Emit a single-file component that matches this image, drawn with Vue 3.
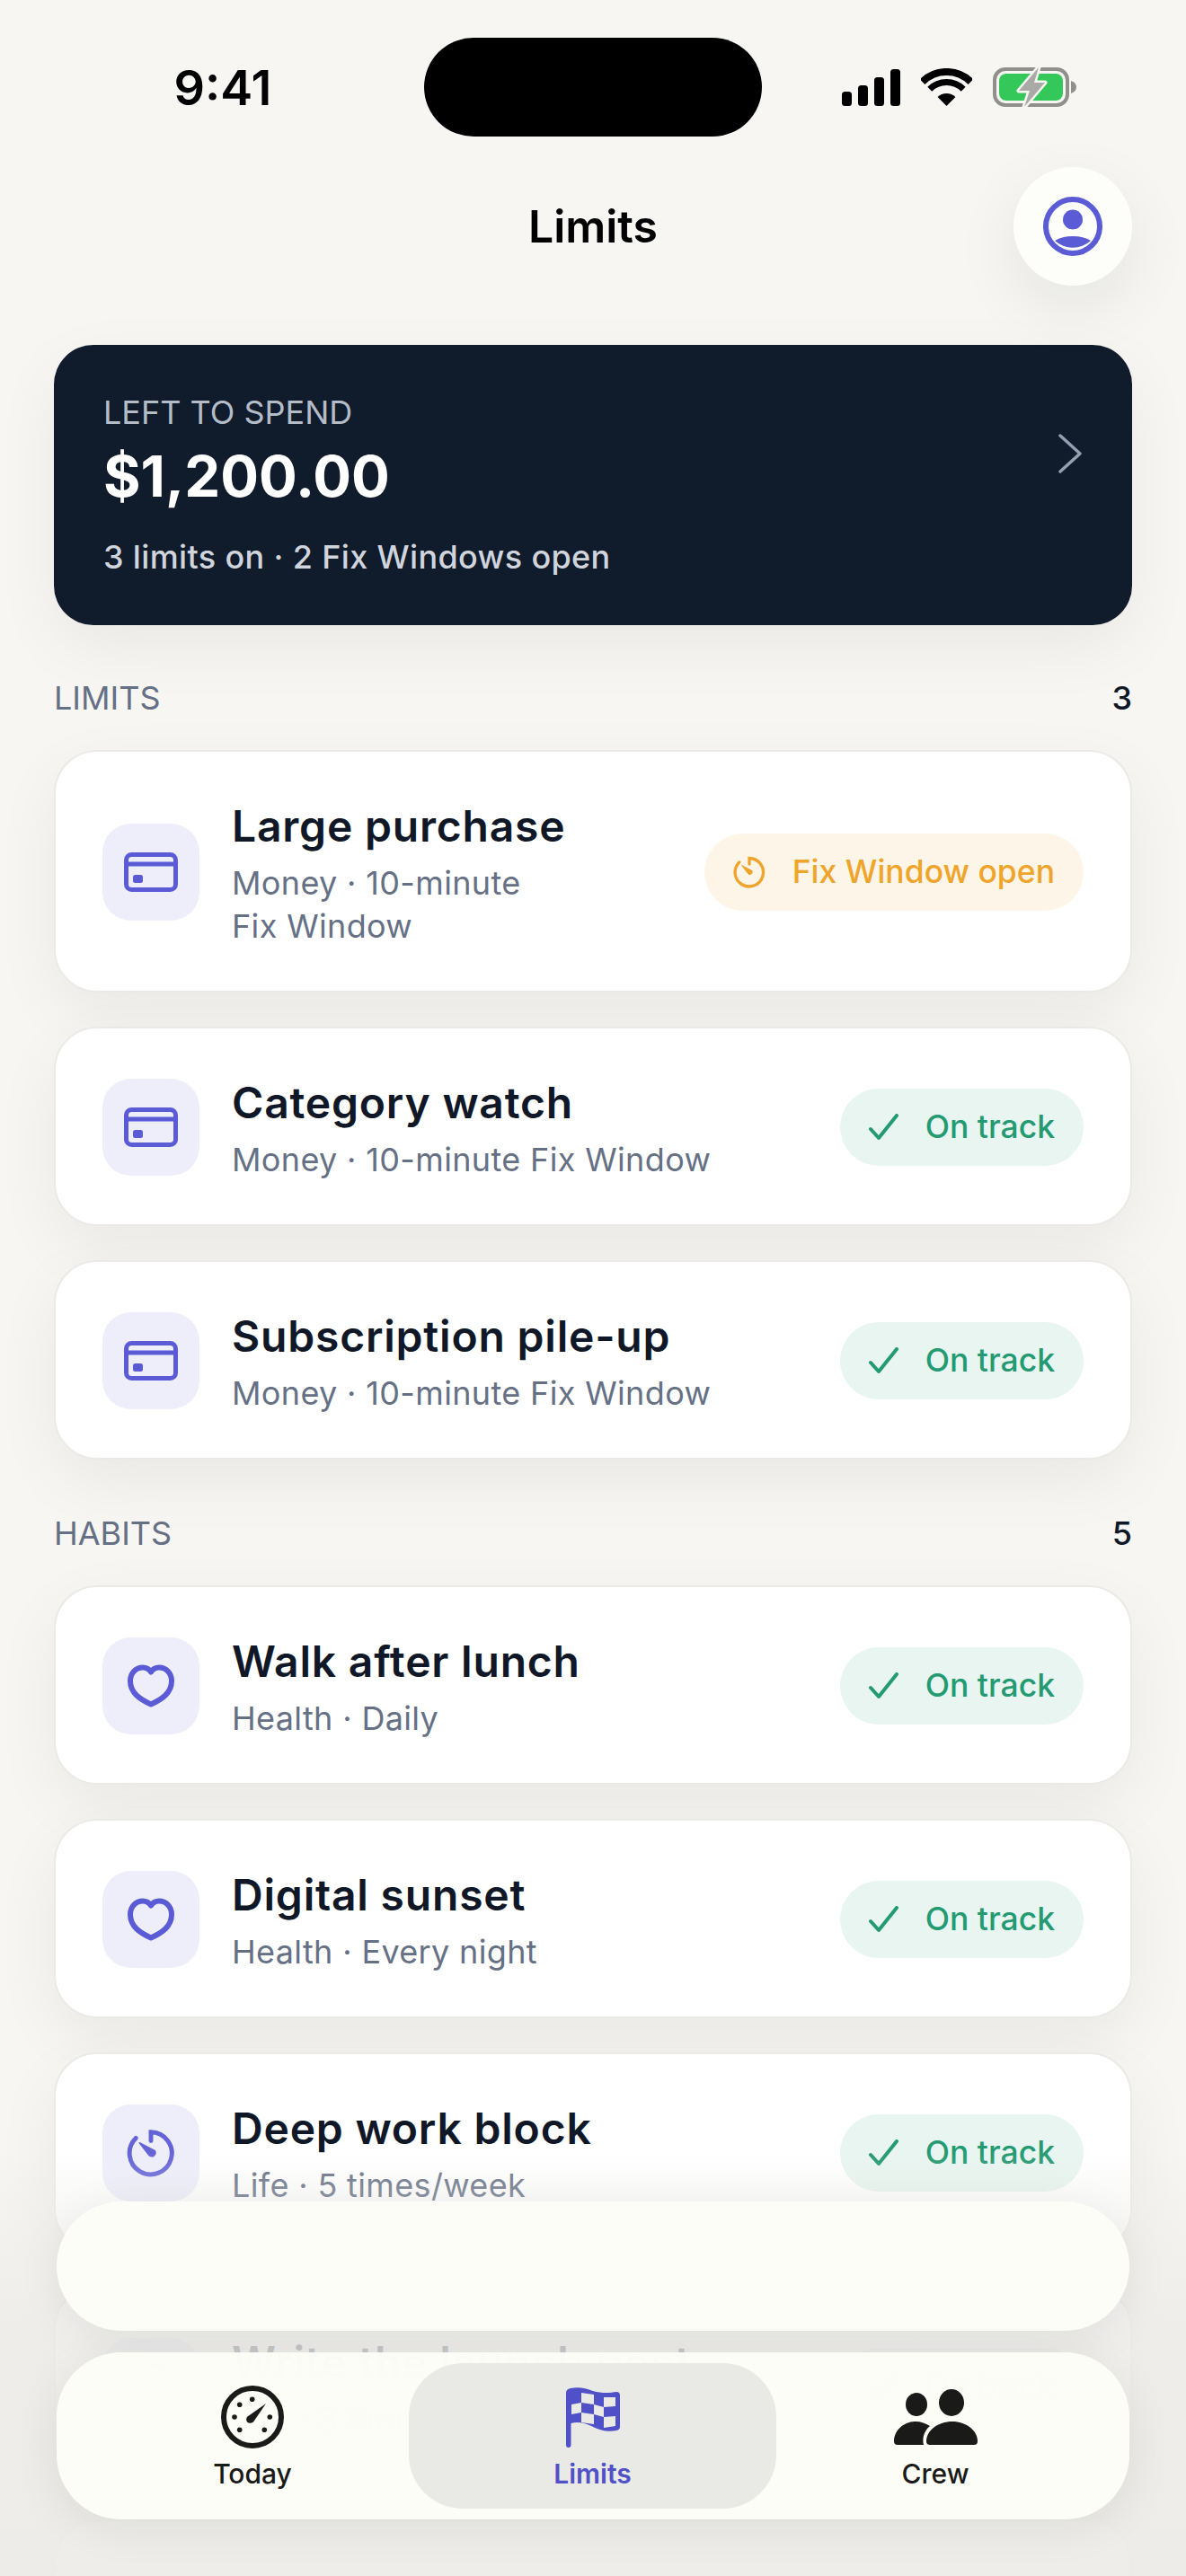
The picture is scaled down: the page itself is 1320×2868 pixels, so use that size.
<script setup>
const limits = [
  { name: 'Large purchase', sub: 'Money · 10-minute Fix\u00a0Window', icon: 'card', open: true },
  { name: 'Category watch', sub: 'Money · 10-minute Fix\u00a0Window', icon: 'card' },
  { name: 'Subscription pile-up', sub: 'Money · 10-minute Fix\u00a0Window', icon: 'card' }
]

const habits = [
  { name: 'Walk after lunch', sub: 'Health · Daily', icon: 'heart' },
  { name: 'Digital sunset', sub: 'Health · Every night', icon: 'heart' },
  { name: 'Deep work block', sub: 'Life · 5 times/week', icon: 'timer' },
  { name: 'Write the launch post', sub: 'Life · 3 times/week', icon: 'timer' }
]

const sections = [
  { title: 'Limits', count: 3, rows: limits },
  { title: 'Habits', count: 5, rows: habits }
]
</script>

<template>
  <div class="screen">
    <div class="status-bar">
      <div class="time">9:41</div>
      <div class="island"></div>
      <div class="status-icons">
        <svg width="65" height="41" viewBox="0 0 65 41">
          <rect x="0" y="25" width="11" height="16" rx="3.5" />
          <rect x="18" y="18" width="11" height="23" rx="3.5" />
          <rect x="36" y="9" width="11" height="32" rx="3.5" />
          <rect x="54" y="0" width="11" height="41" rx="3.5" />
        </svg>
        <svg width="57" height="42" viewBox="0 0 57 42">
          <path d="M1.6 15.1A38 38 0 0 1 55.4 15.1" fill="none" stroke="#000" stroke-width="8" />
          <path d="M9.8 23.3A26.5 26.5 0 0 1 47.2 23.3" fill="none" stroke="#000" stroke-width="7" />
          <path d="M28.5 42L18.6 32.1A14 14 0 0 1 38.4 32.1Z" />
        </svg>
        <svg width="94" height="46" viewBox="0 0 94 46">
          <rect x="2" y="3" width="81" height="40" rx="12" fill="none" stroke="#8f8f8b" stroke-width="4" />
          <rect x="7" y="8" width="71" height="30" rx="8" fill="#34c759" />
          <path d="M87 16Q93 18 93 23Q93 28 87 30Z" fill="#8f8f8b" />
          <path d="M51 1L29 27H41L35 45L58 18H46Z" fill="#a9a9a5" stroke="#f7f6f2" stroke-width="5" stroke-linejoin="round" paint-order="stroke" />
        </svg>
      </div>
    </div>

    <div class="top-bar">
      <div></div>
      <div class="page-title">Limits</div>
      <div class="avatar">
        <svg width="66" height="66" viewBox="0 0 66 66">
          <circle cx="33" cy="33" r="30" fill="none" stroke="#5b5bd6" stroke-width="6" />
          <circle cx="33" cy="25.5" r="11" fill="#5b5bd6" />
          <path d="M13 49Q21 44 33 44Q45 44 53 49A30 30 0 0 1 13 49Z" fill="#5b5bd6" />
        </svg>
      </div>
    </div>

    <div class="hero">
      <div>
        <div class="hero-label">LEFT TO SPEND</div>
        <div class="hero-amount">$1,200.00</div>
        <div class="hero-sub">3 limits on · 2 Fix Windows open</div>
      </div>
      <svg class="hero-arrow" width="26" height="44" viewBox="0 0 26 44">
        <path d="M2 2L24 22L2 42" fill="none" stroke="#94a0b0" stroke-width="3.5" stroke-linecap="round" stroke-linejoin="round" />
      </svg>
    </div>

    <div class="section" v-for="section in sections" :key="section.title">
      <div class="section-head">
        <div class="section-title">{{ section.title }}</div>
        <div class="section-count">{{ section.count }}</div>
      </div>

      <div class="rows">
        <div class="row" v-for="row in section.rows" :key="row.name">
          <div class="row-icon">
            <svg v-if="row.icon === 'card'" width="60" height="44" viewBox="0 0 60 44">
              <rect x="2.5" y="2.5" width="55" height="39" rx="6" fill="none" stroke="#5b5bd6" stroke-width="5" />
              <path d="M2.5 13H57.5" stroke="#5b5bd6" stroke-width="5" />
              <rect x="10" y="25" width="11" height="9" rx="2.5" fill="#5b5bd6" />
            </svg>
            <svg v-else-if="row.icon === 'heart'" width="52" height="48" viewBox="0 0 52 48">
              <path d="M26 44.5C14 39 3 32 3 18.5C3 9.5 9.5 3.5 17 3.5C21 3.5 24 5.5 26 8.5C28 5.5 31 3.5 35 3.5C42.5 3.5 49 9.5 49 18.5C49 32 38 39 26 44.5Z" fill="none" stroke="#5b5bd6" stroke-width="6" stroke-linejoin="round" />
            </svg>
            <svg v-else width="54" height="54" viewBox="0 0 36 36">
              <path d="M18 9V2.5A15.7 15.7 0 1 1 6.8 7" fill="none" stroke="#6464d8" stroke-width="3.3" stroke-linecap="round" />
              <path d="M9.5 10.5L21 16.5Q22 19 19.5 20.5Q17.5 20.8 16.5 19.5Z" fill="#6464d8" stroke="#6464d8" stroke-linejoin="round" />
            </svg>
          </div>

          <div class="row-text">
            <div class="row-name">{{ row.name }}</div>
            <div class="row-sub">{{ row.sub }}</div>
          </div>

          <div class="pill" :class="{ open: row.open }">
            <svg v-if="row.open" width="36" height="36" viewBox="0 0 36 36">
              <path d="M18 9V2.5A15.7 15.7 0 1 1 6.8 7" fill="none" stroke="#efa52b" stroke-width="3.3" stroke-linecap="round" />
              <path d="M9.5 10.5L21 16.5Q22 19 19.5 20.5Q17.5 20.8 16.5 19.5Z" fill="#efa52b" stroke="#efa52b" stroke-linejoin="round" />
            </svg>
            <svg v-else width="33" height="30" viewBox="0 0 33 30">
              <path d="M2 17L11 27L31 2" fill="none" stroke="#249a72" stroke-width="4" stroke-linecap="round" stroke-linejoin="round" />
            </svg>
            <span>{{ row.open ? 'Fix Window open' : 'On track' }}</span>
          </div>
        </div>
        <div class="row row-blank" v-if="section.title === 'Habits'"></div>
      </div>
    </div>

    <div class="fade"></div>
    <div class="float-pill"></div>

    <div class="tab-bar">
      <div class="tab tab-today">
        <div class="tab-icon">
          <svg width="70" height="70" viewBox="0 0 70 70">
            <circle cx="35" cy="35" r="32" fill="none" stroke="#1a1a18" stroke-width="6" />
            <g fill="#1a1a18">
              <circle cx="34.7" cy="15.3" r="2.8" />
              <circle cx="20.7" cy="21.3" r="2.8" />
              <circle cx="15" cy="35" r="2.8" />
              <circle cx="20.7" cy="49.3" r="2.8" />
              <circle cx="48.3" cy="49.3" r="2.8" />
              <circle cx="54.3" cy="35" r="2.8" />
              <path d="M50 20L36 40.5Q32 43 29 40.5Q27 37 29.5 34.5Z" />
            </g>
          </svg>
        </div>
        <span>Today</span>
      </div>
      <div class="tab tab-limits">
        <div class="tab-icon">
          <svg width="60" height="67" viewBox="0 0 60 67">
            <path d="M0 6Q0 2 5 1C14 -1 22 1 30 4C40 7 50 6 56 5Q60 5 60 9V44Q60 47 56 48C46 50 38 48 28 43C20 39 12 38 5.5 40V64Q5.5 67 2.75 67Q0 67 0 64Z" fill="#5050c8" />
            <g fill="#e9e9e5">
              <path d="M17 6L31 8V19L17 17Z" />
              <path d="M42 11L55 11V21L42 22Z" />
              <path d="M6 19L17 17V28L6 30Z" />
              <path d="M31 19L42 22V33L31 30Z" />
              <path d="M17 28L31 30V41L17 39Z" />
              <path d="M42 33L55 32V43L42 45Z" />
            </g>
          </svg>
        </div>
        <span>Limits</span>
      </div>
      <div class="tab tab-crew">
        <div class="tab-icon">
          <svg width="93" height="62" viewBox="0 0 93 62">
            <g fill="#1a1a18">
              <ellipse cx="25" cy="17" rx="12" ry="13" />
              <ellipse cx="64" cy="15" rx="14" ry="15" />
              <path d="M36 62H4Q0 62 0 58C0 46 11 36 24 36C30 36 35 38 40 41C34 46 31 54 33 62Z" />
              <path d="M40 62Q36 62 36 58C36 46 49 36 65 36C80 36 93 46 93 58Q93 62 89 62Z" />
            </g>
          </svg>
        </div>
        <span>Crew</span>
      </div>
    </div>
  </div>
</template>

<style scoped>
.screen {
  width: 1320px;
  height: 2868px;
  position: relative;
  overflow: hidden;
  background: #f7f6f2;
  font-family: Inter, "Noto Sans", sans-serif;
  color: #101828;
}

.status-bar {
  display: grid;
  grid-template-columns: 1fr 376px 1fr;
  align-items: center;
  height: 110px;
  margin-top: 42px;
  margin-bottom: 34px;
}

.time {
  padding-left: 24px;
  text-align: center;
  font-size: 54px;
  font-weight: 600;
  color: #000;
}

.island {
  height: 110px;
  border-radius: 55px;
  background: #000;
}

.status-icons {
  display: flex;
  justify-content: center;
  align-items: center;
  gap: 23px;
  padding-right: 32px;
}

.top-bar {
  display: grid;
  grid-template-columns: 132px 1fr 132px;
  align-items: center;
  margin: 0 60px 66px;
}

.page-title {
  text-align: center;
  font-size: 50px;
  font-weight: 600;
  color: #000;
}

.avatar {
  display: flex;
  align-items: center;
  justify-content: center;
  width: 132px;
  height: 132px;
  border-radius: 50%;
  background: #fdfdf9;
  box-shadow: 0 24px 72px rgba(16, 24, 40, 0.08);
}

.hero {
  display: flex;
  justify-content: space-between;
  height: 312px;
  box-sizing: border-box;
  margin: 0 60px -1px;
  padding: 53px 56px 0 55px;
  border-radius: 44px;
  background: #101b2b;
  box-shadow: 0 24px 72px rgba(16, 24, 40, 0.06);
}

.hero-arrow {
  margin-top: 46px;
}

.hero-label {
  font-size: 36px;
  line-height: 44px;
  color: #b4bcc8;
}

.hero-amount {
  margin-top: 9px;
  font-size: 63.5px;
  line-height: 80px;
  font-weight: 700;
  color: #fff;
}

.hero-sub {
  margin-top: 26px;
  font-size: 36px;
  line-height: 48px;
  font-weight: 500;
  letter-spacing: 0.35px;
  color: #d0d5dd;
}

.section {
  margin: 58px 60px 0;
}

.section-head {
  display: flex;
  justify-content: space-between;
  align-items: center;
  height: 48px;
  margin-bottom: 34px;
}

.section-title {
  font-size: 36px;
  text-transform: uppercase;
  color: #667085;
}

.section-count {
  font-size: 36px;
  font-weight: 500;
  color: #101828;
}

.rows {
  display: flex;
  flex-direction: column;
  gap: 38px;
}

.row {
  display: flex;
  align-items: center;
  gap: 36px;
  padding: 49px 52px 48px;
  border: 2px solid #ebeae6;
  border-radius: 48px;
  background: #fff;
  box-shadow: 0 24px 72px rgba(16, 24, 40, 0.06);
}

.row-blank {
  height: 222px;
  box-sizing: border-box;
}

.row-icon {
  display: flex;
  align-items: center;
  justify-content: center;
  flex-shrink: 0;
  width: 108px;
  height: 108px;
  border-radius: 32px;
  background: #eeeefb;
}

.row-text {
  flex: 1;
  min-width: 0;
  padding-top: 4px;
}

.row-name {
  font-size: 48px;
  line-height: 60px;
  font-weight: 600;
  letter-spacing: 0.8px;
  color: #101828;
}

.row-sub {
  margin-top: 9px;
  font-size: 36px;
  line-height: 48px;
  letter-spacing: 0.35px;
  color: #667085;
}

.pill {
  display: flex;
  align-items: center;
  gap: 30px;
  flex-shrink: 0;
  height: 86px;
  padding: 0 32px;
  border-radius: 43px;
  background: #e8f5f0;
  font-size: 35.5px;
  font-weight: 500;
  color: #249a72;
}

.pill.open {
  background: #fdf5e8;
  color: #efa52b;
}

.fade {
  position: absolute;
  left: 0;
  right: 0;
  top: 2395px;
  bottom: 0;
  background: linear-gradient(to bottom, rgba(236, 235, 231, 0) 0, rgba(236, 235, 231, 0.25) 45px, rgba(236, 235, 231, 0.83) 215px, rgba(236, 235, 231, 0.92) 100%);
}

.float-pill {
  position: absolute;
  left: 63px;
  right: 63px;
  top: 2451px;
  height: 144px;
  border-radius: 72px;
  background: #fdfdf8;
  box-shadow: 0 10px 50px rgba(16, 24, 40, 0.07);
}

.tab-bar {
  position: absolute;
  left: 63px;
  right: 63px;
  top: 2619px;
  height: 186px;
  box-sizing: border-box;
  display: flex;
  padding: 12px 39px 12px 44px;
  border-radius: 72px;
  background: rgba(253, 253, 248, 0.97);
  box-shadow: 0 10px 50px rgba(16, 24, 40, 0.07);
}

.tab {
  display: flex;
  flex-direction: column;
  align-items: center;
  padding-top: 25px;
  box-sizing: border-box;
  font-size: 30px;
  line-height: 40px;
  font-weight: 500;
  color: #1a1a18;
}

.tab-icon {
  display: flex;
  align-items: center;
  height: 70px;
  margin-bottom: 8px;
}

.tab-today {
  width: 348px;
}

.tab-limits {
  width: 409px;
  border-radius: 60px;
  background: #e9e9e5;
  font-weight: 600;
  color: #5050c8;
}

.tab-crew {
  width: 354px;
}
</style>

<style>
html,
body {
  background: #f7f6f2;
}
</style>
